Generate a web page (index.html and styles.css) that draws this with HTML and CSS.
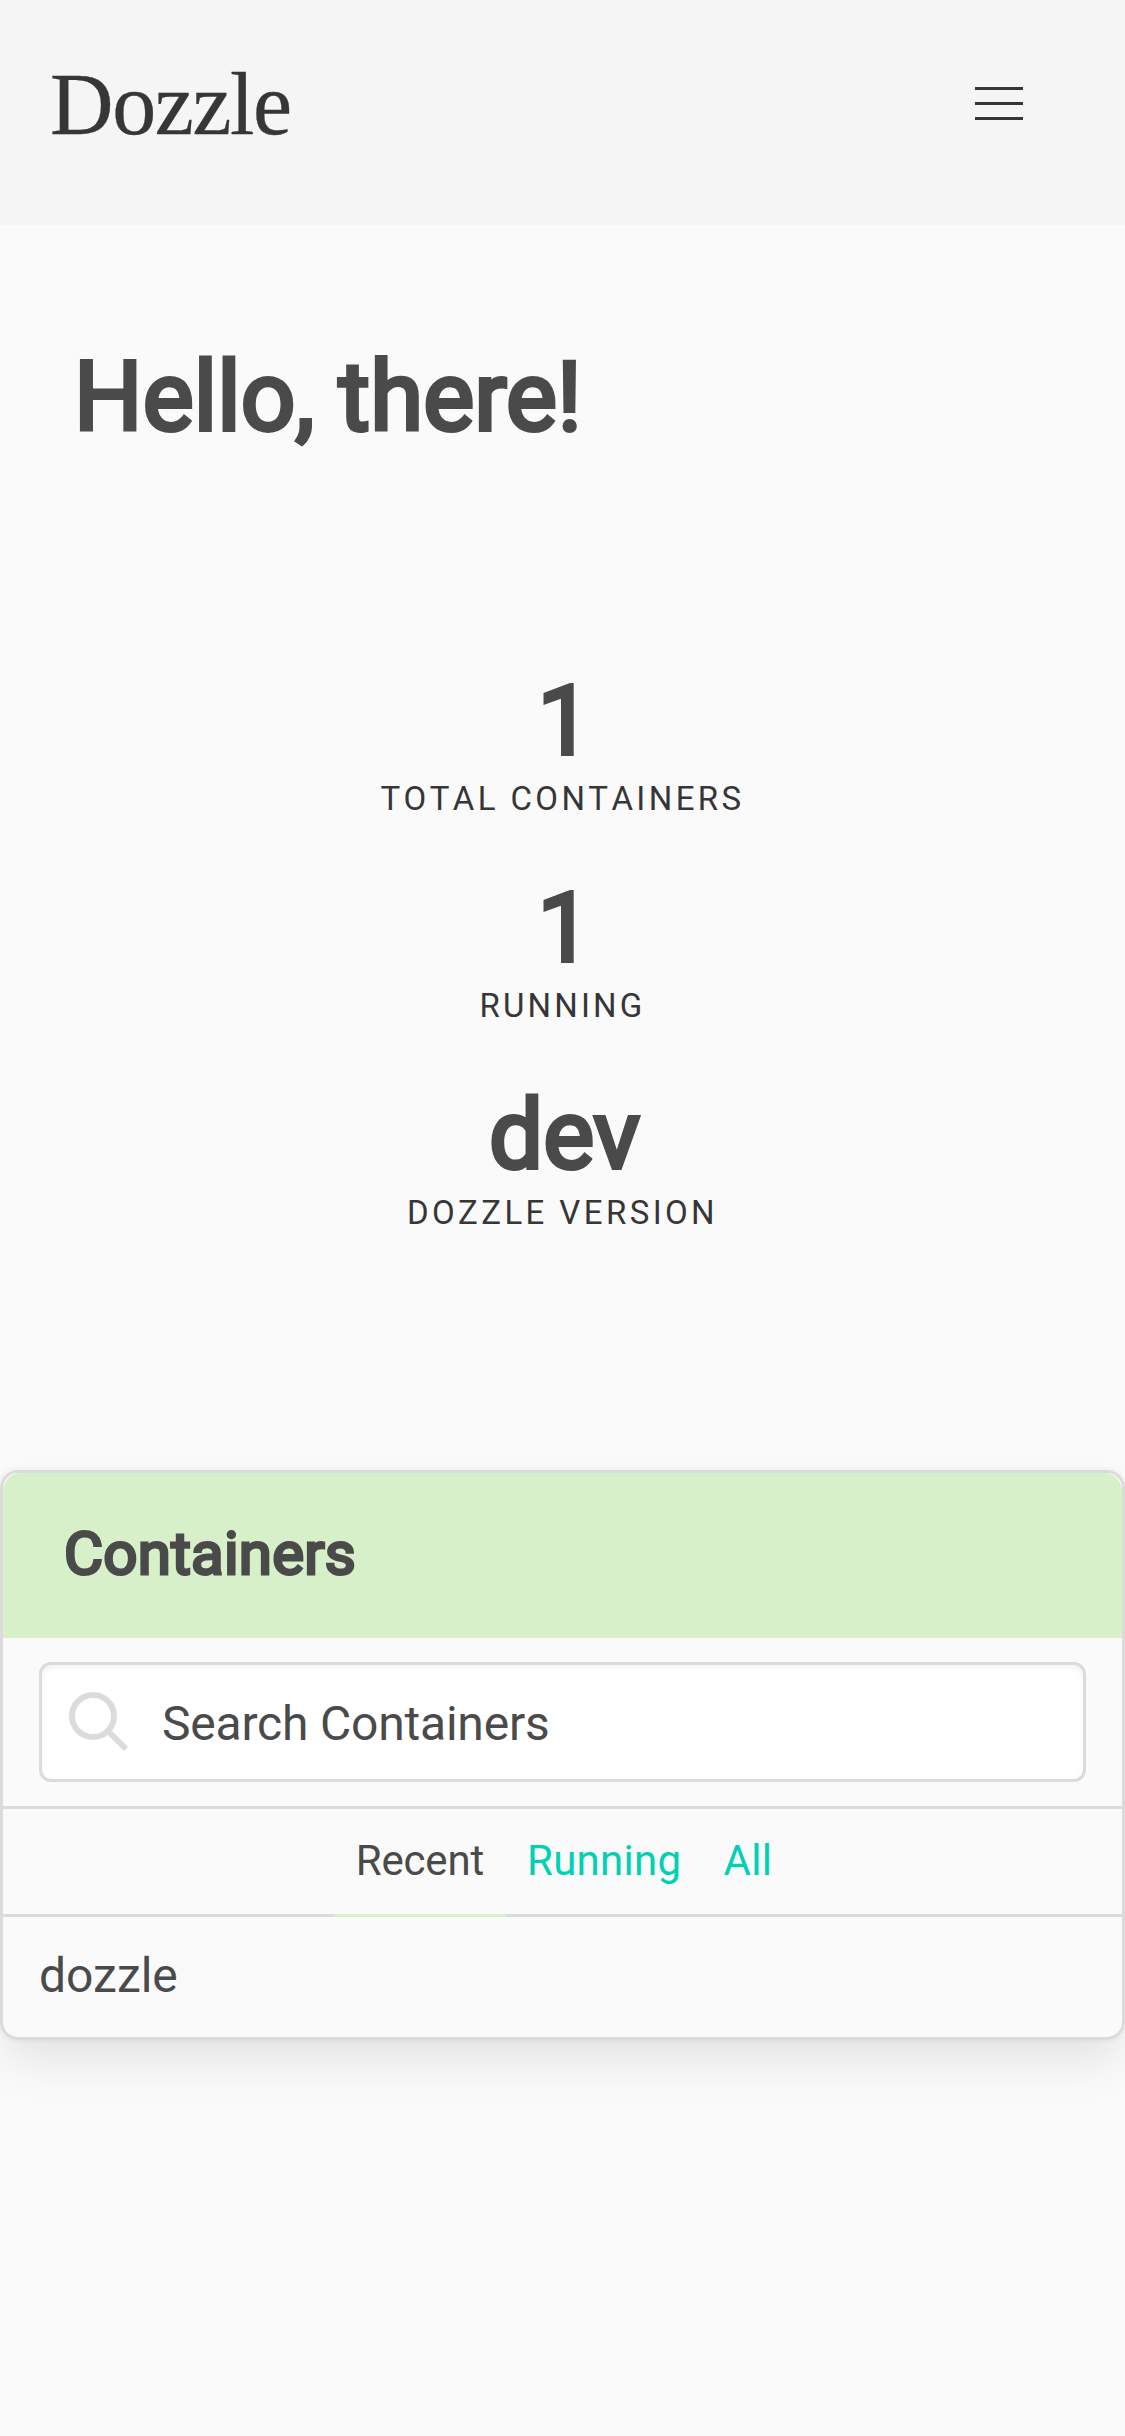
FILE: index.html
```html
<!DOCTYPE html>
<html lang="en">
<head>
<meta charset="utf-8">
<title>Dozzle</title>
<link rel="stylesheet" href="styles.css">
</head>
<body>
<header class="navbar">
  <h1 class="logo">Dozzle</h1>
  <button class="burger" aria-label="Menu"><span></span><span></span><span></span></button>
</header>
<main>
  <section class="hero"><h2 class="title greeting">Hello, there!</h2></section>
  <section class="level">
    <div class="level-item"><p class="title">1</p><p class="heading wide">Total Containers</p></div>
    <div class="level-item"><p class="title">1</p><p class="heading">Running</p></div>
    <div class="level-item"><p class="title">dev</p><p class="heading wide">Dozzle Version</p></div>
  </section>
  <nav class="panel">
    <p class="panel-heading"><span class="panel-title">Containers</span></p>
    <div class="search-block">
      <div class="search">
        <svg class="search-icon" viewBox="0 0 60 60" fill="none" stroke="#dbdbdb" stroke-width="6"><circle cx="24" cy="24" r="21"/><path d="M39 39 57 57"/></svg>
        <span class="search-text">Search Containers</span>
      </div>
    </div>
    <div class="tabs"><a class="tab active">Recent</a><a class="tab">Running</a><a class="tab">All</a></div>
    <a class="container-row">dozzle</a>
  </nav>
</main>
</body>
</html>
```
FILE: styles.css
```css
* { box-sizing: border-box; margin: 0; padding: 0; }
body {
  min-height: 2436px;
  background: #fafafa;
  color: #4a4a4a;
  font: 400 48px/72px Roboto, sans-serif;
}
.navbar {
  display: flex;
  justify-content: space-between;
  height: 225px;
  padding: 0 102px 0 50px;
  background: #f5f5f5;
}
.logo {
  padding-top: 51px;
  color: #363636;
  font: 400 88px/108px "Liberation Serif", serif;
  letter-spacing: -1.4px;
  -webkit-text-stroke: 0.3px #363636;
}
.burger {
  display: flex;
  flex-direction: column;
  gap: 12px;
  height: 33px;
  margin-top: 87px;
  border: 0;
  background: none;
}
.burger span { width: 48px; height: 3px; background: #363636; }
.title {
  padding-left: 4px;
  font-size: 96px;
  font-weight: 400;
  line-height: 108px;
  -webkit-text-stroke: 4px #4a4a4a;
}
.greeting { padding-left: 0; letter-spacing: 0.15px; }
.hero { height: 433px; padding: 118px 72px 0 74px; }
.level { height: 812px; padding-top: 9px; text-align: center; }
.level-item { height: 207px; }
.heading {
  color: #363636;
  font-size: 33px;
  line-height: 48px;
  letter-spacing: 3.15px;
  font-kerning: none;
  text-transform: uppercase;
}
.heading.wide { letter-spacing: 3.4px; }
.panel {
  height: 570px;
  overflow: hidden;
  border: 3px solid #dbdbdb;
  border-radius: 18px;
  box-shadow: 0 24px 48px -6px rgba(10, 10, 10, .1), 0 0 0 3px rgba(10, 10, 10, .02);
}
.panel-heading {
  height: 165px;
  padding: 43px 61px;
  border-radius: 18px 18px 0 0;
  background: #d7f0c9;
  font-size: 60px;
  line-height: 75px;
  letter-spacing: 0.25px;
}
.panel-title { -webkit-text-stroke: 3px #4a4a4a; }
.search-block { padding: 24px 36px; border-bottom: 3px solid #dbdbdb; height: 171px; }
.search {
  display: flex;
  align-items: center;
  gap: 33px;
  height: 120px;
  padding-left: 27px;
  border: 3px solid #dbdbdb;
  border-radius: 12px;
  background: #fff;
  box-shadow: inset 0 3px 6px rgba(10, 10, 10, .05);
}
.search-icon { width: 60px; height: 60px; }
.search-text { padding-top: 3px; letter-spacing: -0.2px; }
.tabs {
  display: flex;
  justify-content: center;
  height: 108px;
  padding-left: 3px;
  background: linear-gradient(#dbdbdb, #dbdbdb) bottom / 100% 3px no-repeat;
  font-size: 42px;
  line-height: 103px;
}
.tab { padding: 0 21px; border-bottom: 3px solid transparent; color: #00d1b2; letter-spacing: 0.3px; }
.tab.active { padding-right: 22px; border-color: #d7f0c9; color: #4a4a4a; letter-spacing: -0.2px; }
.container-row { display: block; padding: 23px 36px; }
```
